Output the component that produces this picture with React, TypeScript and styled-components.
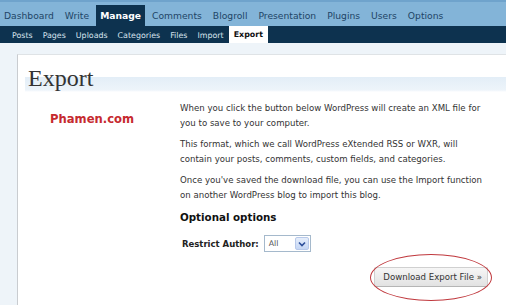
import styled, { createGlobalStyle } from 'styled-components'

const GlobalStyle = createGlobalStyle`
  html, body {
    margin: 0;
    padding: 0;
    background: #f1f6fa;
    overflow: hidden;
  }
  body {
    font-family: 'DejaVu Sans', Verdana, sans-serif;
    width: 506px;
    height: 305px;
  }
`

const topItems = ['Dashboard', 'Write', 'Manage', 'Comments', 'Blogroll', 'Presentation', 'Plugins', 'Users', 'Options']
const subItems = ['Posts', 'Pages', 'Uploads', 'Categories', 'Files', 'Import', 'Export']

const Page = styled.div`
  display: flex;
  flex-direction: column;
  width: 506px;
  height: 305px;
`

const TopNav = styled.nav`
  display: flex;
  align-items: flex-end;
  height: 26px;
  background: #83b4d8;
  border-top: 2px solid #6fa3cc;
  box-sizing: border-box;
`

const TopItem = styled.span<{ $active?: boolean }>`
  display: flex;
  align-items: center;
  height: 21px;
  padding: 0 4px;
  margin-right: 3px;
  font-size: 9.2px;
  color: ${(p) => (p.$active ? '#ffffff' : '#1e4466')};
  font-weight: ${(p) => (p.$active ? 'bold' : 'normal')};
  background: ${(p) => (p.$active ? '#0d324f' : 'transparent')};
`

const SubNav = styled.nav`
  display: flex;
  align-items: flex-end;
  height: 17px;
  padding-left: 7px;
  background: #0d324f;
`

const SubItem = styled.span<{ $active?: boolean }>`
  display: flex;
  align-items: center;
  height: ${(p) => (p.$active ? '17px' : '16px')};
  padding: 0 5px;
  font-size: 7.9px;
  color: ${(p) => (p.$active ? '#111' : '#d7e3ee')};
  font-weight: ${(p) => (p.$active ? 'bold' : 'normal')};
  background: ${(p) => (p.$active ? '#ffffff' : 'transparent')};
`

const Body = styled.main`
  flex: 1;
  padding: 11px 0 0 17px;
  background: #eef4f9;
  display: flex;
`

const Panel = styled.section`
  flex: 1;
  background: #ffffff;
  border-left: 1px solid #c9ccd0;
  border-top: 1px solid #dfe3e6;
  padding: 9px 0 0 7px;
`

const Heading = styled.h2`
  margin: 0;
  padding: 0 0 0 3px;
  font-family: Georgia, 'Liberation Serif', 'DejaVu Serif', serif;
  font-weight: normal;
  font-size: 24px;
  line-height: 28px;
  color: #333;
  background: linear-gradient(to bottom, #fff 0, #fff 13px, #e3eef7 13px, #edf4fa 26px, #fff 28px);
`

const Columns = styled.div`
  display: grid;
  grid-template-columns: 155px 1fr;
  padding-top: 9px;
`

const Logo = styled.div`
  padding: 11px 0 0 25px;
  font-size: 11.6px;
  font-weight: bold;
  color: #c62a2f;
`

const Content = styled.div`
  display: flex;
  flex-direction: column;
  padding-right: 21px;
`

const Para = styled.p`
  margin: 0 0 6px;
  font-size: 8.6px;
  line-height: 15px;
  color: #333;
`

const SubHeading = styled.h3`
  margin: 2px 0 12px;
  font-size: 10.3px;
  font-weight: bold;
  color: #111;
`

const FieldRow = styled.div`
  display: flex;
  align-items: center;
  gap: 5px;
  padding-left: 2px;
`

const Label = styled.span`
  font-size: 8.5px;
  font-weight: bold;
  color: #222;
`

const Select = styled.div`
  display: flex;
  align-items: center;
  justify-content: space-between;
  width: 47px;
  height: 17px;
  box-sizing: border-box;
  border: 1px solid #a5b9cc;
  background: #fff;
  padding: 0 1px 0 4px;
  font-size: 7.8px;
  color: #555;
`

const SelectArrow = styled.span`
  display: flex;
  align-items: center;
  justify-content: center;
  width: 14px;
  height: 13px;
  background: linear-gradient(#e6eefb, #c5d6f4);
  border: 1px solid #b8c9ea;
  box-sizing: border-box;
  border-radius: 2px;
`

const ButtonRow = styled.div`
  display: flex;
  justify-content: flex-end;
  margin: 2px -7px 0 0;
`

const ButtonWrap = styled.div`
  position: relative;
  padding: 13px 4px 14px;
`

const Ellipse = styled.span`
  position: absolute;
  left: 0;
  right: 0;
  top: 0;
  bottom: 0;
  border: 1px solid #c0393e;
  border-radius: 50%;
  pointer-events: none;
`

const Button = styled.button`
  display: block;
  height: 20px;
  padding: 0 5px 0 8px;
  font-family: 'DejaVu Sans', Verdana, sans-serif;
  font-size: 8.6px;
  color: #333;
  background: linear-gradient(#f6f6f6, #e2e2e2);
  border: 1px solid #d0d0d0;
  border-bottom-color: #b5b5b5;
  border-radius: 2px;
`

export default function App() {
  return (
    <Page>
      <GlobalStyle />
      <TopNav>
        {topItems.map((item) => (
          <TopItem key={item} $active={item === 'Manage'}>
            {item}
          </TopItem>
        ))}
      </TopNav>
      <SubNav>
        {subItems.map((item) => (
          <SubItem key={item} $active={item === 'Export'}>
            {item}
          </SubItem>
        ))}
      </SubNav>
      <Body>
        <Panel>
          <Heading>Export</Heading>
          <Columns>
            <Logo>Phamen.com</Logo>
            <Content>
              <Para>
                When you click the button below WordPress will create an XML file for you to save to your computer.
              </Para>
              <Para>
                This format, which we call WordPress eXtended RSS or WXR, will contain your posts, comments, custom
                fields, and categories.
              </Para>
              <Para>
                Once you've saved the download file, you can use the Import function on another WordPress blog to
                import this blog.
              </Para>
              <SubHeading>Optional options</SubHeading>
              <FieldRow>
                <Label>Restrict Author:</Label>
                <Select>
                  All
                  <SelectArrow>
                    <svg width='8' height='6' viewBox='0 0 8 6'>
                      <path d='M1 1.5 L4 4.5 L7 1.5' fill='none' stroke='#2d4f9a' strokeWidth='1.6' />
                    </svg>
                  </SelectArrow>
                </Select>
              </FieldRow>
              <ButtonRow>
                <ButtonWrap>
                  <Ellipse />
                  <Button>Download Export File »</Button>
                </ButtonWrap>
              </ButtonRow>
            </Content>
          </Columns>
        </Panel>
      </Body>
    </Page>
  )
}
